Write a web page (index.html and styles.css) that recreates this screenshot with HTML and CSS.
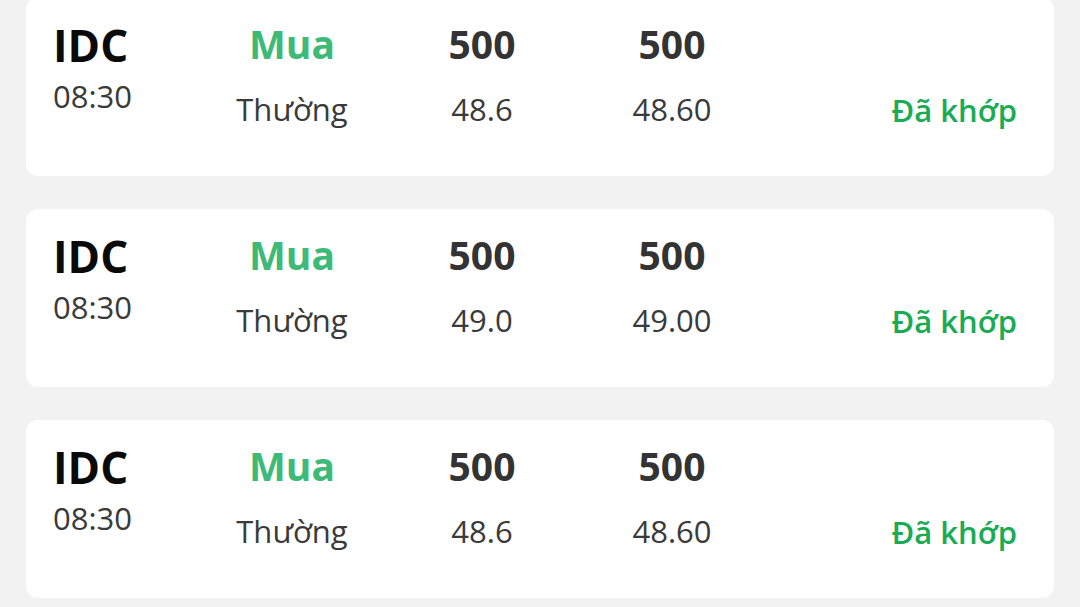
FILE: index.html
```html
<!DOCTYPE html>
<html lang="vi">
<head>
<meta charset="utf-8">
<title>Lệnh</title>
<link rel="stylesheet" href="styles.css">
</head>
<body>
<div class="list">
  <div class="order">
    <div class="col col-sym"><div class="sym">IDC</div><div class="time">08:30</div></div>
    <div class="col col-mid"><div class="top buy">Mua</div><div class="bottom">Thường</div></div>
    <div class="col col-mid"><div class="top">500</div><div class="bottom">48.6</div></div>
    <div class="col col-mid"><div class="top">500</div><div class="bottom">48.60</div></div>
    <div class="col col-status"><div class="status">Đã khớp</div></div>
  </div>
  <div class="order">
    <div class="col col-sym"><div class="sym">IDC</div><div class="time">08:30</div></div>
    <div class="col col-mid"><div class="top buy">Mua</div><div class="bottom">Thường</div></div>
    <div class="col col-mid"><div class="top">500</div><div class="bottom">49.0</div></div>
    <div class="col col-mid"><div class="top">500</div><div class="bottom">49.00</div></div>
    <div class="col col-status"><div class="status">Đã khớp</div></div>
  </div>
  <div class="order">
    <div class="col col-sym"><div class="sym">IDC</div><div class="time">08:30</div></div>
    <div class="col col-mid"><div class="top buy">Mua</div><div class="bottom">Thường</div></div>
    <div class="col col-mid"><div class="top">500</div><div class="bottom">48.6</div></div>
    <div class="col col-mid"><div class="top">500</div><div class="bottom">48.60</div></div>
    <div class="col col-status"><div class="status">Đã khớp</div></div>
  </div>
</div>
</body>
</html>
```

FILE: styles.css
```css
html, body {
  margin: 0;
  padding: 0;
  background: #f2f2f2;
  font-family: "Open Sans", "Noto Sans", sans-serif;
  overflow: hidden;
}

.list {
  display: flex;
  flex-direction: column;
  gap: 33px;
  padding: 0 26px;
  margin-top: -2px;
}

.order {
  background: #ffffff;
  border-radius: 12px;
  height: 178px;
  box-sizing: border-box;
  padding: 24px 37px 0 27px;
  display: grid;
  grid-template-columns: 144px 190px 190px 190px 1fr;
  align-items: start;
}

.col {
  display: flex;
  flex-direction: column;
}

.col-mid {
  align-items: center;
}

.col-status {
  align-items: flex-end;
}

.sym {
  font-size: 44px;
  line-height: 44px;
  font-weight: 700;
  color: #0a0a0a;
  margin-top: 1px;
}

.time {
  font-size: 31px;
  line-height: 31px;
  color: #3a3a3a;
  margin-top: 13.5px;
}

.top {
  font-size: 39px;
  line-height: 39px;
  font-weight: 700;
  color: #333333;
  margin-top: 2px;
}

.top.buy {
  color: #3dba78;
}

.bottom {
  font-size: 31px;
  line-height: 31px;
  color: #3a3a3a;
  margin-top: 31px;
}

.status {
  font-size: 31px;
  line-height: 31px;
  font-weight: 600;
  color: #1aab55;
  margin-top: 73px;
}
```
